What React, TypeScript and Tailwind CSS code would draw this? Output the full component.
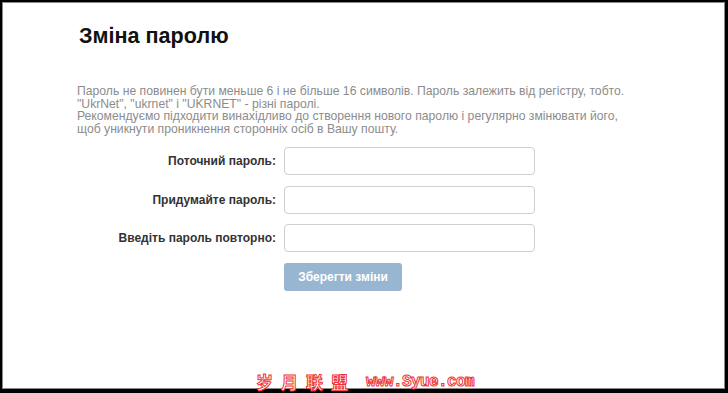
import React from "react";

const fields = [
  "Поточний пароль:",
  "Придумайте пароль:",
  "Введіть пароль повторно:",
];

export default function App() {
  return (
    <div className="relative w-[728px] h-[393px] bg-black pt-[2px] pl-[2px] pr-[3px] pb-[4px] font-['Liberation_Sans',Arial,sans-serif]">
      <div className="h-full bg-white border border-[#8a8a8a]">
        <h1 className="pl-[76px] pt-[21px] text-[21.6px] font-bold text-[#111] leading-[24px]">
          Зміна паролю
        </h1>

        <div className="pl-[74px] pt-[37px] text-[12.2px] leading-[12.5px] text-[#8c8c8c]">
          <p>
            Пароль не повинен бути меньше 6 і не більше 16 символів. Пароль залежить від регістру, тобто.
          </p>
          <p>"UkrNet", "ukrnet" і "UKRNET" - різні паролі.</p>
          <p>Рекомендуємо підходити винахідливо до створення нового паролю і регулярно змінювати його,</p>
          <p>щоб уникнути проникнення сторонніх осіб в Вашу пошту.</p>
        </div>

        <form className="pl-[73px] pt-[12px] flex flex-col gap-[10.5px]">
          {fields.map((label) => (
            <div key={label} className="flex items-center">
              <label className="w-[200px] text-right text-[12px] font-bold text-[#333]">
                {label}
              </label>
              <input
                type="password"
                className="ml-[8px] w-[251px] h-[28px] rounded-[4px] border border-[#cfcfcf] bg-white outline-none"
              />
            </div>
          ))}
          <div className="pl-[208px]">
            <button
              type="button"
              className="w-[118px] h-[28px] rounded-[3px] bg-[#98b6d2] text-white text-[12px] font-bold"
            >
              Зберегти зміни
            </button>
          </div>
        </form>
      </div>

      <div className="absolute left-[256px] top-[372px] flex items-end gap-[10px] text-white text-[17px] font-bold leading-[20px] [-webkit-text-stroke:1px_#ee3333]">
        <span className="font-['Noto_Sans_CJK_SC',sans-serif] tracking-[8px]">岁月联盟</span>
        <span className="font-['Liberation_Mono',monospace] text-[16px] tracking-[-0.6px]">www.Syue.com</span>
      </div>
    </div>
  );
}
